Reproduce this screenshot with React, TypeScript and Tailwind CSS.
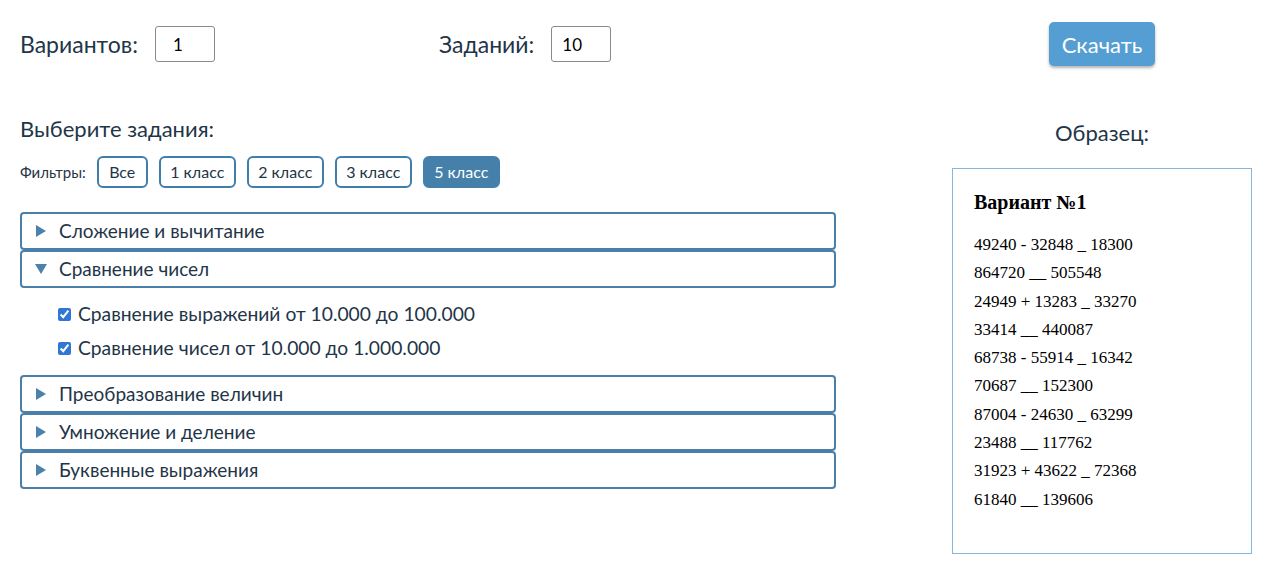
import { useState } from "react";

const sections = [
  { title: "Сложение и вычитание", open: false, items: [] as string[] },
  {
    title: "Сравнение чисел",
    open: true,
    items: ["Сравнение выражений от 10.000 до 100.000", "Сравнение чисел от 10.000 до 1.000.000"],
  },
  { title: "Преобразование величин", open: false, items: [] },
  { title: "Умножение и деление", open: false, items: [] },
  { title: "Буквенные выражения", open: false, items: [] },
];

const filters = ["Все", "1 класс", "2 класс", "3 класс", "5 класс"];

const sample = [
  "49240 - 32848 _ 18300",
  "864720 __ 505548",
  "24949 + 13283 _ 33270",
  "33414 __ 440087",
  "68738 - 55914 _ 16342",
  "70687 __ 152300",
  "87004 - 24630 _ 63299",
  "23488 __ 117762",
  "31923 + 43622 _ 72368",
  "61840 __ 139606",
];

function Triangle({ open }: { open: boolean }) {
  return (
    <svg width="12" height="12" viewBox="0 0 12 12" className="fill-[#4a82ad]">
      {open ? <polygon points="0,1 12,1 6,11" /> : <polygon points="1,0 11,6 1,12" />}
    </svg>
  );
}

export default function App() {
  const [active, setActive] = useState("5 класс");
  const [open, setOpen] = useState(sections.map((s) => s.open));

  return (
    <div className="flex w-[1280px] h-[583px] bg-white text-[#1f3548] font-['Lato',sans-serif]">
      <div className="w-[816px] ml-5 pt-[26px]">
        <div className="flex items-center h-9">
          <div className="flex items-center w-[419px]">
            <span className="text-[23px] mr-[17px]">Вариантов:</span>
            <input
              defaultValue="1"
              className="w-[60px] h-9 border border-[#8a8a8a] rounded-[3px] px-[17px] text-[17px] text-black outline-none"
            />
          </div>
          <div className="flex items-center">
            <span className="text-[23px] mr-[17px]">Заданий:</span>
            <input
              defaultValue="10"
              className="w-[60px] h-9 border border-[#8a8a8a] rounded-[3px] px-[10px] text-[17px] text-black outline-none"
            />
          </div>
        </div>

        <h2 className="text-[22px] mt-[53px] leading-7">Выберите задания:</h2>

        <div className="flex items-center mt-[13px] gap-[11px]">
          <span className="text-[15px]">Фильтры:</span>
          {filters.map((f) => (
            <button
              key={f}
              onClick={() => setActive(f)}
              className={
                (f === "Все" ? "w-[51px] " : "w-[77px] ") +
                (active === f
                  ? "h-8 rounded-[6px] border-2 border-[#4580ab] bg-[#4580ab] text-white text-[16px]"
                  : "h-8 rounded-[6px] border-2 border-[#3f7eab] bg-white text-[#1f3548] text-[16px]")
              }
            >
              {f}
            </button>
          ))}
        </div>

        <div className="mt-[24px] flex flex-col">
          {sections.map((s, i) => (
            <div key={s.title}>
              <div
                onClick={() => setOpen(open.map((o, j) => (j === i ? !o : o)))}
                className="h-[38px] flex items-center border-2 border-[#4a7fa9] rounded-[4px] pl-[13px] gap-[12px] cursor-pointer"
              >
                <Triangle open={open[i]} />
                <span className="text-[19px]">{s.title}</span>
              </div>
              {open[i] && s.items.length > 0 && (
                <div className="pl-[38px] pt-[15px] pb-[16px] flex flex-col gap-[12px]">
                  {s.items.map((it) => (
                    <label key={it} className="flex items-center gap-[7px] h-[22px]">
                      <input type="checkbox" defaultChecked className="w-[13px] h-[13px] accent-[#2f76d6]" />
                      <span className="text-[19.25px]">{it}</span>
                    </label>
                  ))}
                </div>
              )}
            </div>
          ))}
        </div>
      </div>

      <div className="ml-[116px] w-[300px] flex flex-col items-center pt-[22px]">
        <button className="h-[44px] px-[13px] rounded-[5px] bg-[#559ed3] text-white text-[22px] shadow-[0_2px_3px_rgba(0,0,0,0.3)]">
          Скачать
        </button>
        <div className="text-[22px] mt-[55px] leading-6">Образец:</div>
        <div className="mt-[23px] w-[300px] h-[386px] border border-[#86b6da] pl-[21px] pt-[21px] font-['Liberation_Serif',serif] text-black">
          <div className="text-[20px] font-bold leading-6">Вариант №1</div>
          <div className="mt-[17px] flex flex-col">
            {sample.map((l) => (
              <div key={l} className="text-[17px] leading-[28.3px]">
                {l}
              </div>
            ))}
          </div>
        </div>
      </div>
    </div>
  );
}
